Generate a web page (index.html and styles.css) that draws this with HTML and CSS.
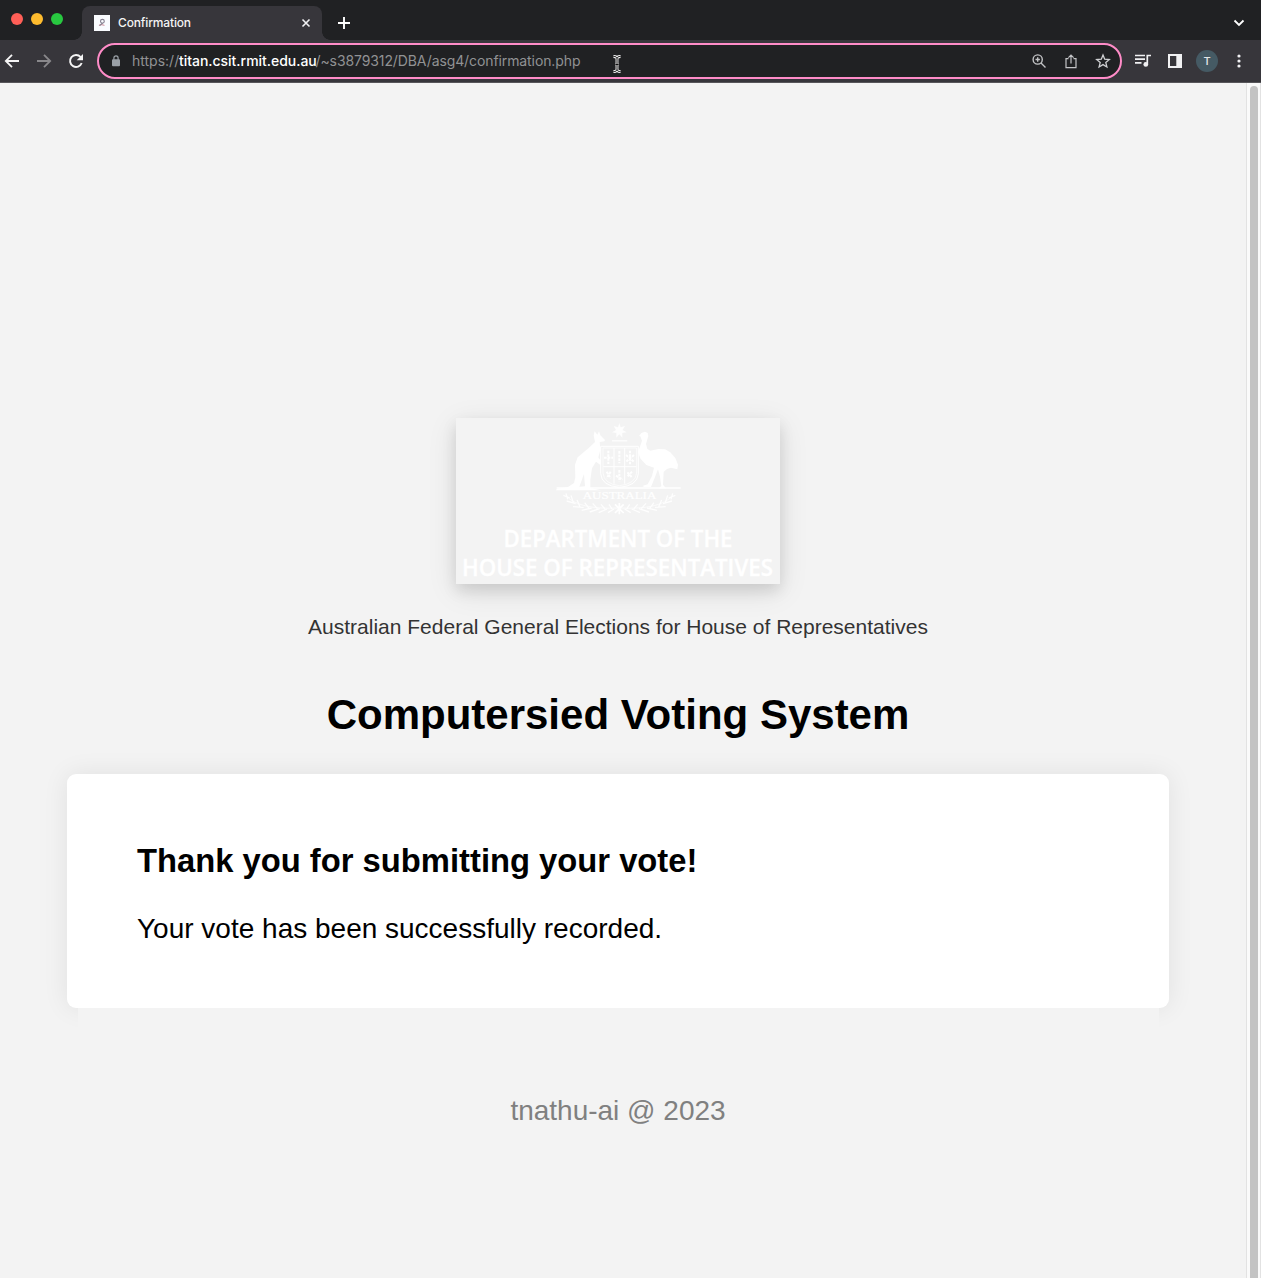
FILE: index.html
```
<!DOCTYPE html>
<html lang="en">
<head>
<meta charset="utf-8">
<title>Confirmation</title>
<link rel="stylesheet" href="styles.css">
</head>
<body>
<div class="browser">
  <header class="tabstrip">
    <div class="lights"><i class="light red"></i><i class="light amber"></i><i class="light green"></i></div>
    <div class="tab">
      <svg class="favicon" viewBox="0 0 16 16" width="16" height="16"><path fill="#fafcff" d="M0 0h16v16H0z"/><g fill="none" stroke-width="1.1"><circle cx="8.4" cy="6.3" r="1.9" stroke="#858090"/><path stroke="#d7a2ad" d="M5 10.500c2-1.600 3-1.200 5.500 0"/><path stroke="#858090" d="M8.600 8l-3 2.600"/></g></svg>
      <span class="tab-title">Confirmation</span>
      <svg class="tab-close" viewBox="0 0 10 10" width="10" height="10"><path d="M1.5 1.5l7 7m0-7l-7 7" stroke="#f1f1f3" stroke-width="1.6"/></svg>
    </div>
    <svg class="new-tab" viewBox="0 0 12 12" width="12" height="12"><path d="M6 0v12M0 6h12" stroke="#fff" stroke-width="1.9"/></svg>
    <svg class="chevron" viewBox="0 0 12 8" width="12" height="8"><path d="M1.5 1.5L6 6l4.500-4.500" fill="none" stroke="#fff" stroke-width="1.8"/></svg>
  </header>
  <nav class="toolbar">
    <svg class="nav-icon" viewBox="0 0 16 16" width="16" height="16"><path d="M15 8H2.500M8 1.800L1.800 8 8 14.200" fill="none" stroke="#f5f5f5" stroke-width="1.8"/></svg>
    <svg class="nav-icon" viewBox="0 0 16 16" width="16" height="16"><path d="M1 8h12.500M8 1.800L14.200 8 8 14.200" fill="none" stroke="#89888b" stroke-width="1.8"/></svg>
    <svg class="nav-icon" viewBox="0 0 16 16" width="16" height="16"><path d="M13.700 10A6 6 0 1 1 12.600 4" fill="none" stroke="#f5f5f5" stroke-width="1.9"/><path d="M15 1v6.300H8.700z" fill="#f5f5f5"/></svg>
    <div class="omnibox">
      <svg class="lock" viewBox="0 0 8 12" width="8" height="12"><path d="M1.900 5V3a2.100 2.100 0 0 1 4.200 0v2" fill="none" stroke="#9aa0a6" stroke-width="1.200"/><rect y="4.200" width="8" height="7" rx="1" fill="#9aa0a6"/></svg>
      <span class="url"><span class="scheme">https://</span><span class="host">titan.csit.rmit.edu.au</span><span class="path">/~s3879312/DBA/asg4/confirmation.php</span></span>
      <div class="omni-actions">
        <svg viewBox="0 0 16 16" width="16" height="16" fill="none" stroke="#c3c4c6" stroke-width="1.400"><circle cx="6.700" cy="6.500" r="4.600"/><path d="M10 10l4.500 4.500M4.500 6.500h4.400M6.700 4.300v4.400"/></svg>
        <svg viewBox="0 0 16 16" width="16" height="16" fill="none" stroke="#c3c4c6" stroke-width="1.200"><path d="M5.500 5.600H3v9h10v-9h-2.500M8 10.500V2M5.400 4.600L8 2l2.600 2.600"/></svg>
        <svg viewBox="0 0 16 16" width="16" height="16" fill="none" stroke="#d0d1d3" stroke-width="1.300"><path d="M8 2l1.700 4.200 4.600.35-3.500 3 1.100 4.400L8 11.600l-3.900 2.350 1.100-4.400-3.500-3 4.600-.35z"/></svg>
      </div>
    </div>
    <div class="tools">
      <svg viewBox="0 0 16 16" width="16" height="16"><path d="M0 2.500h10M0 6.200h10M0 9.900h6.500M12.300 11V2.500H16" fill="none" stroke="#f1f1f3" stroke-width="1.700"/><circle cx="10.800" cy="11.400" r="2.400" fill="#f1f1f3"/></svg>
      <svg viewBox="0 0 16 16" width="16" height="16"><path fill="#f1f1f3" fill-rule="evenodd" d="M1 1h14v14H1zM3 3v10h6.300V3z"/></svg>
      <span class="avatar">T</span>
      <svg class="menu" viewBox="0 0 4 14" width="4" height="14" fill="#f1f1f3"><circle cx="2" cy="2" r="1.600"/><circle cx="2" cy="7" r="1.600"/><circle cx="2" cy="12" r="1.600"/></svg>
    </div>
    <svg class="cursor" viewBox="0 0 10 18" width="10" height="18" fill="none"><path d="M1.500 1.500C3.500 1.500 5 2 5 3.500v11c0 1.500-1.500 2-3.500 2M8.500 1.500C6.500 1.500 5 2 5 3.500M5 14.500c0 1.500 1.500 2 3.500 2M3.500 9.500h3" stroke="#fff" stroke-width="2.800"/><path d="M1.500 1.500C3.500 1.500 5 2 5 3.500v11c0 1.500-1.500 2-3.500 2M8.500 1.500C6.500 1.500 5 2 5 3.500M5 14.500c0 1.500 1.500 2 3.500 2M3.500 9.500h3" stroke="#111" stroke-width="1"/></svg>
  </nav>
  <div class="viewport">
    <main class="page">
      <svg class="logo" viewBox="0 0 324 166" width="324" height="166">
        <g transform="translate(84 -3) scale(.33333)" fill="#fff">
          <path d="M238 24l4 13 13-4-7 12 12 7-13 2 0 14-9-10-9 10 0-14-13-2 12-7-7-12 13 4z" opacity=".85"/>
          <path d="M216 75h46v5h-46z" opacity=".7"/>
          <path d="M164 49l8 10 5-10 4 12 14 14-2 4-14 2 2 25-6 21 8 11-2 12-13-10-12 20-5 34 0 25 32 7H48l2-4 34-6 18-12 4-17-1-38 8-22 33-28 19-18-4-20z"/>
          <path d="M118 215l14-38 3 37z" fill="#f3f3f3"/>
          <path d="M297 63l7-9 11-4 8 4 2 9-7 24 4 15 9 5 24-5 20 1 16 9 15 17 8 20-2 14-19-5-12 4-10 9-2 38 9 11h-22l8-7-4-28-6-22-9 23-12 30h-20l-6-3 16-5 13-25 6-25-23-8-17-18-8-20 12-35-5-13z"/>
          <g fill="none" stroke="#fff">
            <path d="M182 94h113v82q-3 37-57 41-53-4-56-41z" stroke-width="3"/>
            <path d="M189 99h101v75q-3 33-52 38-46-5-49-38z" stroke-width="2"/>
            <path d="M190 155h99M222 99v107M254 99v107" stroke-width="3"/>
            <path d="M205 107v40M192 128h27M270 107v42M258 120l24 20m0-20l-24 20M238 108v37M200 170l12 20m0-20l-12 20M238 165v34M228 182l20 12M262 172l14 15m0-17l-14 15" stroke-width="6" stroke-dasharray="8 3"/>
            <path d="M50 219h372" stroke-width="4"/>
            <path d="M78 242q38 43 160 37 122 6 160-37" stroke-width="2"/>
            <path d="M78 235l5 18M70 241l20 8M93 241l8 25M80 258l27 8M111 255l9 20M99 275l32 2M134 263l13 17M125 286l30-7M158 265l14 16M149 291l30-10M183 268l12 14M176 293l25-11M207 268l9 14M204 293l18-11M398 235l-5 18M406 241l-20 8M383 241l-8 25M396 258l-27 8M365 255l-9 20M377 275l-32 2M342 263l-13 17M351 286l-30-7M318 265l-14 16M327 291l-30-10M293 268l-12 14M300 293l-25-11M269 268l-9 14M272 293l-18-11" stroke-width="4" opacity=".85"/>
            <path d="M225 268l26 26m0-26l-26 26M238 264v34" stroke-width="5"/>
          </g>
          <text class="country" x="128" y="251" textLength="221" lengthAdjust="spacingAndGlyphs">AUSTRALIA</text>
        </g>
        <text class="dept" x="47.500" y="129" textLength="229" lengthAdjust="spacingAndGlyphs">DEPARTMENT OF THE</text>
        <text class="dept" x="6" y="158" textLength="311" lengthAdjust="spacingAndGlyphs">HOUSE OF REPRESENTATIVES</text>
      </svg>
      <p class="subtitle">Australian Federal General Elections for House of Representatives</p>
      <h1 class="title">Computersied Voting System</h1>
      <section class="card">
        <h2>Thank you for submitting your vote!</h2>
        <p>Your vote has been successfully recorded.</p>
      </section>
      <footer class="footer">tnathu-ai @ 2023</footer>
    </main>
    <div class="scrollbar"><div class="thumb"></div></div>
  </div>
</div>
</body>
</html>
```
FILE: styles.css
```
* { box-sizing: border-box; }
body { margin: 0; background: #f3f3f3; font-family: "Liberation Sans", Arial, sans-serif; }
svg { display: block; flex: none; }
.browser { height: 1278px; display: flex; flex-direction: column; overflow: hidden; }

.tabstrip { height: 40px; flex: none; display: flex; background: #202123; font-family: Inter, sans-serif; }
.lights { display: flex; gap: 8px; padding: 13px 0 0 11px; width: 82px; }
.light { width: 12px; height: 12px; border-radius: 50%; }
.red { background: #ff5f57; }
.amber { background: #febc2e; }
.green { background: #28c840; }
.tab { position: relative; width: 240px; height: 34px; margin-top: 6px; padding: 0 11px 0 12px; display: flex; align-items: center; background: #37363b; border-radius: 8px 8px 0 0; }
.tab::before, .tab::after { content: ""; position: absolute; bottom: 0; width: 8px; height: 8px; }
.tab::before { left: -8px; background: radial-gradient(circle at 0 0, transparent 7.5px, #37363b 8px); }
.tab::after { right: -8px; background: radial-gradient(circle at 100% 0, transparent 7.5px, #37363b 8px); }
.tab-title { margin-left: 8px; padding-bottom: 2px; flex: 1; color: #f4f4f5; font-size: 12px; font-weight: 500; letter-spacing: -.15px; }
.new-tab { margin: 17px 0 0 16px; }
.chevron { margin: 19px 16px 0 auto; }

.toolbar { position: relative; height: 43px; flex: none; display: flex; align-items: center; padding: 0 20px 1px 4px; background: #37363b; border-bottom: 1px solid #57565a; font-family: Inter, sans-serif; }
.nav-icon { margin-right: 16px; }
.nav-icon:nth-child(3) { margin-right: 13px; }
.omnibox { width: 1025px; height: 36px; flex: none; display: flex; align-items: center; padding: 0 9px 0 13px; border: 2px solid #ff8cc8; border-radius: 18px; background: #202123; }
.url { margin-left: 12px; font-size: 14px; line-height: 20px; color: #919294; white-space: nowrap; display: flex; }
.scheme { width: 47px; }
.host { width: 136.500px; color: #fff; font-weight: 500; letter-spacing: -.03px; }
.path { letter-spacing: -.1px; }
.omni-actions { display: flex; gap: 16px; margin-left: auto; }
.tools { display: flex; align-items: center; gap: 16px; margin-left: 13px; }
.avatar { width: 22px; height: 22px; margin: 0 -3px; border-radius: 50%; background: #455a64; color: #e3e7e9; font-size: 11px; font-weight: 500; line-height: 22px; text-align: center; }
.menu { margin-left: 6px; }
.cursor { position: absolute; left: 612px; top: 15px; }

.viewport { flex: 1; display: flex; min-height: 0; }
.page { width: 1246px; padding: 335px 77px 0 67px; display: flex; flex-direction: column; align-items: center; }
.logo { background: #f3f3f3; overflow: visible; box-shadow: 0 7px 14px rgba(0,0,0,.1), 0 7px 28px rgba(0,0,0,.1); }
.dept { font: 600 22.5px "Open Sans", sans-serif; fill: #fff; stroke: #fff; stroke-width: .35px; }
.country { font: 400 29px "Liberation Serif", serif; fill: #fff; stroke: #fff; stroke-width: .6px; }
.subtitle { margin: 31px 0 0; color: #333; font-size: 21px; line-height: 24px; }
.title { margin: 52px 0 0; font-size: 42px; line-height: 48px; }
.card { width: 1102px; height: 234px; margin-top: 35px; padding: 68px 70px 0; background: #fff; border-radius: 9px; box-shadow: 0 0 26px rgba(0,0,0,.08); }
.card h2 { margin: 0; font-size: 32.76px; line-height: 38px; }
.card p { margin: 33px 0 0; font-size: 28px; line-height: 32px; }
.footer { position: relative; width: 1081px; height: 210px; padding-top: 87px; background: #f3f3f3; color: #808080; font-size: 28px; line-height: 32px; text-align: center; }
.scrollbar { width: 15px; padding: 3px 2px 0 3px; border-left: 1px solid #e2e2e2; border-right: 1px solid #e2e2e2; background: #fafafa; }
.thumb { width: 8px; height: 1210px; border-radius: 4px; background: #c3c3c3; }
```
